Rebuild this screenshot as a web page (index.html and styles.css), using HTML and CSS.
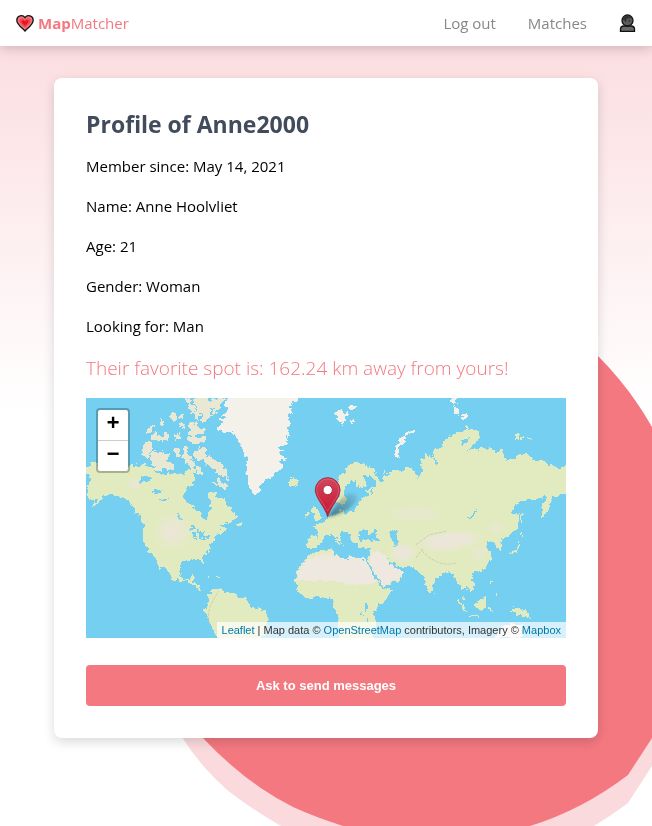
FILE: index.html
```html
<!DOCTYPE html>
<html lang="en">
<head>
<meta charset="utf-8">
<meta name="viewport" content="width=device-width, initial-scale=1">
<title>MapMatcher</title>
<link rel="stylesheet" href="styles.css">
</head>
<body>
<svg class="backdrop" viewBox="0 0 652 826" preserveAspectRatio="xMaxYMax slice" aria-hidden="true">
  <path fill="#fbdadd" d="M500 600H652V766L628 803Q612 815 594 826H281Q250 808 227 790Q200 766 182 737L160 690Z"/>
  <path fill="#f47880" d="M560 320L598 356Q630 388 652 427V738L628 775Q582 810 530 826H343Q315 817 293 807Q245 783 202 737L180 700Z"/>
</svg>
<header class="topbar">
  <a class="brand" href="#">
    <svg class="brand-icon" viewBox="0 0 18 17" aria-hidden="true">
      <path fill="#f47880" stroke="#161616" stroke-width="1.3" d="M9 16C7 13.500 .8 9.800 .8 5.200C.8 .8 6.600-.8 9 2.600C11.400-.8 17.200 .8 17.200 5.200C17.200 9.800 11 13.500 9 16Z"/>
      <path fill="#f04a56" d="M9 13C7.500 11 3.200 8.700 3.200 5.700C3.200 2.800 7.200 2.300 9 5C10.800 2.300 14.800 2.800 14.800 5.700C14.800 8.700 10.500 11 9 13Z"/>
      <path fill="#ea1522" d="M9 11C8 9.500 5.500 8.500 5.500 6.600C5.500 5 8 4.800 9 6.500C10 4.800 12.500 5 12.500 6.600C12.500 8.500 10 9.500 9 11Z"/>
    </svg>
    <span class="brand-name"><b>Map</b>Matcher</span>
  </a>
  <nav class="menu">
    <a href="#">Log out</a>
    <a href="#">Matches</a>
    <a class="account" href="#" aria-label="Account">
      <svg viewBox="0 0 17 18" aria-hidden="true">
        <path fill="#6a6a6a" stroke="#111" stroke-width="1.300" d="M1.500 17.300V15Q1.500 12.300 5 12H12Q15.500 12.300 15.500 15V17.300Z"/>
        <circle cx="8.500" cy="6.500" r="5.500" fill="#5c5c5c" stroke="#111" stroke-width="1.300"/>
        <path fill="#333" d="M3.500 6Q4 1.500 8.500 1.500T13.500 5Q10 3.500 7.500 5.500Q6 7 3.500 6Z"/>
        <path fill="#111" d="M6 6.300h1.200v1.200H6zM9.600 6.300h1.200v1.200H9.600z"/>
      </svg>
    </a>
  </nav>
</header>
<main class="card">
  <h1>Profile of Anne2000</h1>
  <p>Member since: May 14, 2021</p>
  <p>Name: Anne Hoolvliet</p>
  <p>Age: 21</p>
  <p>Gender: Woman</p>
  <p>Looking for: Man</p>
  <p class="distance">Their favorite spot is: 162.24 km away from yours!</p>
  <div class="map">
    <svg class="world" viewBox="0 0 1440 720" preserveAspectRatio="xMidYMid slice" role="img" aria-label="World map">
      <defs>
        <radialGradient id="dry"><stop offset="0" stop-color="#ede5dc"/><stop offset=".4" stop-color="#ede5dc" stop-opacity=".8"/><stop offset="1" stop-color="#ede5dc" stop-opacity="0"/></radialGradient>
        <linearGradient id="sahara" x1="0" y1="0" x2="0" y2="1"><stop offset="0" stop-color="#e6eacb"/><stop offset=".3" stop-color="#efe8e1"/><stop offset="1" stop-color="#efe8e1"/></linearGradient>
        <linearGradient id="pin" x1="0" y1="0" x2="0" y2="1"><stop offset="0" stop-color="#d0475e"/><stop offset="1" stop-color="#c8142d"/></linearGradient>
        <linearGradient id="shade" x1="0" y1="1" x2="1" y2="0"><stop offset="0" stop-color="#243c3c" stop-opacity=".6"/><stop offset="1" stop-color="#243c3c" stop-opacity=".08"/></linearGradient>
        <filter id="soft"><feGaussianBlur stdDeviation="4"/></filter>
        <filter id="coast" filterUnits="userSpaceOnUse" x="-20" y="-20" width="1480" height="760">
          <feTurbulence type="fractalNoise" baseFrequency=".07" numOctaves="2" seed="4"/>
          <feDisplacementMap in="SourceGraphic" scale="20" xChannelSelector="R" yChannelSelector="G"/>
        </filter>
      </defs>
      <rect width="1440" height="720" fill="#75cff0"/>
      <g shape-rendering="crispEdges" filter="url(#coast)">
        <g fill="#e2ebbf">
          <path d="M-20 205L12 202 20 192 30 187 36 215 130 208 133 204 150 197 160 205 172 198 182 200 185 210 205 212 210 222 238 235 245 225 258 228 280 225 297 232 295 222 312 218 318 205 330 215 318 228 322 236 330 243 318 250 325 260 312 265 300 270 293 285 295 308 318 325 340 337 347 345 350 362 362 362 362 345 372 335 372 310 365 290 372 278 388 285 388 295 400 300 408 305 412 298 418 315 430 322 438 335 445 350 458 355 440 372 415 375 400 390 420 385 420 400 405 405 390 412 385 430 370 440 372 455 362 462 350 480 355 500 347 497 345 485 320 487 300 485 283 495 280 520 292 540 302 548 310 543 318 530 327 530 320 555 340 558 340 570 348 582 330 568 310 555 285 550 255 542 248 520 235 505 225 500 230 516 218 505 212 490 200 470 188 462 185 445 172 438 172 400 178 385 165 375 160 355 150 345 145 330 130 310 115 300 105 297 80 290 60 295 50 293 48 305 40 312 35 320 15 330 35 308 15 305 0 290 10 270 0 262 15 240 10 232 -20 230Z"/>
          <path d="M372 585L385 573 403 573 410 580 440 582 455 597 480 600 492 625 530 635 548 650 540 680 525 730H400L375 680 355 640 362 625 365 600Z"/>
          <path d="M662 420L690 412 695 418 692 395 680 385 700 380 715 372 722 360 740 350 758 348 765 330 775 350 790 342 805 340 812 320 825 310 825 300 845 295 840 280 845 270 870 262 868 240 855 235 845 230 835 238 840 262 825 270 808 262 808 247 800 243 780 265 775 295 785 305 768 325 757 318 755 250 770 222 790 200 805 196 822 192 835 200 850 205 870 220 872 237 880 250 890 243 890 220 900 232 920 220 945 220 960 213 960 205 978 207 985 215 990 240 1005 235 1010 218 1002 200 1008 175 1015 185 1022 168 1035 178 1040 170 1050 200 1057 195 1045 175 1045 150 1065 150 1072 130 1080 120 1100 115 1110 108 1130 102 1140 80 1150 93 1175 98 1182 115 1175 130 1155 145 1145 160 1165 150 1175 155 1185 145 1200 152 1220 155 1230 158 1240 160 1245 150 1252 180 1265 185 1275 180 1295 183 1300 165 1310 165 1330 175 1345 190 1375 187 1385 200 1410 203 1425 210 1440 198H1460V290H1425L1410 295 1395 295 1390 330 1372 360 1365 355 1365 325 1385 300 1380 290 1372 298 1350 305 1310 305 1290 320 1275 342 1300 348 1298 375 1285 398 1270 412 1250 420 1243 435 1248 455 1240 460 1225 435 1205 430 1200 445 1215 465 1215 490 1200 508 1180 520 1160 525 1155 535 1163 555 1163 570 1150 577 1135 565 1128 575 1120 565 1110 550 1100 530 1090 520 1070 525 1045 545 1038 582 1030 585 1020 570 1012 535 1000 522 980 507 940 505 925 495 905 485 912 500 930 510 955 525 935 550 895 563 885 560 865 525 840 487 850 478 855 452 820 452 815 435 795 430 785 405 770 400 762 405 770 435 755 420 742 410 720 415 705 425 695 445 670 450 662 445Z"/>
          <path d="M670 470L700 460 740 452 745 470 785 485 790 475 840 487 865 530 885 568 915 575 905 600 865 640 870 680 860 730H760L755 650 740 625 740 600 690 598 660 600 635 580 628 550 630 525 645 500Z"/>
          <path d="M678 330l5-10 8 12 12 18 2 12-22 4 4-20-10-5zM660 345l10-5v15l-10 5zM608 245l18-4 12 5-5 15-18 4-12-10z"/>
          <path d="M740 410l18 15 15 18-20-10zM1297 430h5v20l-15 12-20 2 20-10 10-15zM1305 405l10 8-10 5zM1305 350h4v25h-4zM1168 617l15-10 17-12v35l-18 5-14-8zM1110 600l15 12 20 30-10-5zM1215 545l6 3-5 12-4-5zM1275 632l30-2 15 10 15 22-25-6-20-14-18 2zM1212 628l8 3-6 10zM1150 650l35 3v2h-35zM1130 595l9 12-5 5-8-10zM1230 585l5 2v7h-5zM1041 587h4v6h-4z"/>
          <path d="M1286 110l12-2 2 18-14-2zM1302 113h15v9h-15zM1325 120l15 3v3h-15zM450 378h17v7h-13zM370 530l4 7h-4zM390 538h12v3h-12z"/>
        </g>
        <g fill="#e9e8d3">
          <path d="M165 165l10-28 15-2 12 10-7 20-10 14-18-8zM192 172l16-16 5 10 15-12 4 12 15 4-3 20 22 10-4 18-32-6-22 8 5-12-18-8zM268 155l14-7-2 20 4 12-14-4zM290 143l16 2-1 25 10 10-17 18-9-20 5-12zM305 190l15-7 10 20-10 12-19-14zM322 165l16-9 5-12 17 10 0 16 14 2 4 12 12 2 6 10 12 2 8 15 9 8-4 15 14 14-14-4-14-15-18-4 4-8-14-12-18-6-14-14-15-3zM380 250l14 5 4-20 12 20 9 5 2 14-18-4-6-10-12 4z"/>
          <path d="M178 103l14-16 12-8-6 19-14 10zM198 112l16-9v10l18 3 4-14 11 8v15l-33 5-14-5zM212 78l16-12 7 6-12 15zM250 50l20-9 4 24-16 8zM262 110l22-6-3 19-14 2zM276 56l18-7-4 17zM283 74l9-4 1 20-9-6zM305 77l22-5 5 14 24 6-4 14-22 2-7 12-15-12 6-10zM304 122l18-10 10 10 24-7 2 16-20 4-30-2zM331 200l14 5 2 25-15-5zM343 60l10 2-2 16z"/>
          <path d="M293 0h16l5 18 17 6-5 24-22-14 8-16zM318 0h44l4 12 20-10 14 12-14 16-16 6 6 22-22 16-10-22-13-10 6-18-14-8zM328 38l14 14-4 16-10-8zM430 0l-18 2-12 32-28 24 12-28-10-8 18-22z"/>
        </g>
        <g fill="#f4f0ea">
          <path d="M428-15L420 20 425 38 412 50 417 62 395 62 408 72 395 92 403 103 440 100 455 125 460 145 470 155 475 175 485 183 482 230 492 270 503 290 515 290 523 265 530 255 545 238 555 240 570 220 590 212 595 200 578 195 583 185 600 190 595 175 580 170 590 160 580 145 597 145 605 125 600 115 613 118 605 90 612 70 605 50 620 40 612 28 620 10 635 12 635-15Z"/>
          <path d="M750 40l15-5 10 12 10-8 5 10-12 6-5 30-7-15-12-5zM785 28l20-8 7 10-20 9zM792 68l10-3v12h-7zM925 170l8-30 15-27 12-7v17l-15 15-10 30 5 15zM960 105l20-8 10-7-5 14-25 12zM1096-15h18v35h-16zM1102 28l18 5v15h-14zM1127 50l16-4 3 14-18 7z"/>
          <path d="M1240 690l20-12h50v42h-80z"/>
        </g>
        <path fill="url(#sahara)" d="M652 500L670 480 740 458 745 470 785 485 790 475 840 487 865 530 868 555 790 560 730 548 630 550 634 520Z"/>
        <path fill="#efe8e1" d="M860 458L885 462 915 500 930 510 955 525 935 545 895 560 885 558 850 490Z"/>
        <g fill="#75cff0">
          <path d="M165 238l12-6 20 8-7 12-24 4zM200 278l35-7-20 17-15 3zM223 306l22-5v6l-22 4zM273 345l8 4 6 20-10-3zM305 393l17-14 12 14-14-2-10 5zM318 402h10l5 22h-10zM335 395l12 12 12-6-8 16-12 2zM348 417l27-7-7 10-22 7z"/>
          <path d="M815 412l15-18 15 2v10l10 2 5-17 15 8-8 8 14 18-16 5-28-5-14 5zM905 405l18-14 12 7-5 10 8 18v22l-16 2 3-18zM822 290l22-8 2 12-20 6zM852 282l8-8v14zM1145 360l15-8 12-22-1 20-17 16zM1125 125l10 3 15-5v7l-15 6-8 10zM835 618l12 2v12l-12 5zM823 632l8 20v8zM842 655l7 20h-4zM836 482l10 6 24 42 18 32-8-2-16-28z"/>
        </g>
      </g>
      <g fill="url(#dry)">
        <ellipse cx="1070" cy="432" rx="85" ry="34"/><ellipse cx="1125" cy="422" rx="65" ry="28"/>
        <ellipse cx="950" cy="465" rx="45" ry="35"/><ellipse cx="990" cy="345" rx="90" ry="30" opacity=".5"/>
        <ellipse cx="260" cy="400" rx="60" ry="60" opacity=".8"/><ellipse cx="145" cy="260" rx="26" ry="18" opacity=".7"/>
        <ellipse cx="1230" cy="390" rx="30" ry="24" opacity=".5"/>
        <ellipse cx="1180" cy="465" rx="30" ry="30" opacity=".5"/>
      </g>
      <g fill="none" stroke="#c5c8ac" stroke-width="3" stroke-dasharray="10 3" opacity=".8">
        <path d="M1008 458Q1025 480 1055 492T1112 494M990 440L1030 410 1080 400M372 680Q355 640 398 580M990 480l20-28"/>
      </g>
      <path fill="url(#shade)" filter="url(#soft)" d="M725 357L760 308Q790 278 808 290T788 332Q765 350 725 357Z"/>
      <path fill="url(#pin)" stroke="#a52b41" stroke-width="3" d="M725 356C719 330 688 300 688 276A37 37 0 0 1 762 276C762 300 731 330 725 356Z"/>
      <path fill="none" stroke="#e17b8a" stroke-width="2" opacity=".7" d="M725 340C716 320 692 297 692 276A33 33 0 0 1 758 276C758 297 734 320 725 340"/>
      <circle cx="725" cy="276" r="14" fill="#fff" stroke="#ae2b41" stroke-width="3"/>
    </svg>
    <div class="zoom">
      <button type="button" aria-label="Zoom in">+</button>
      <button type="button" aria-label="Zoom out">−</button>
    </div>
    <div class="credits"><a href="#">Leaflet</a> | Map data © <a href="#">OpenStreetMap</a> contributors, Imagery © <a href="#">Mapbox</a></div>
  </div>
  <button class="ask" type="button">Ask to send messages</button>
</main>
</body>
</html>
```
FILE: styles.css
```css
* { box-sizing: border-box; }

body {
  margin: 0;
  min-height: 100vh;
  background: linear-gradient(#fbdadd, #fff 50%) no-repeat fixed;
  color: #000;
  font: 15px/24px "Segoe UI", "Open Sans", "Noto Sans", sans-serif;
}

a { color: inherit; text-decoration: none; }

.backdrop {
  position: fixed;
  inset: 0;
  z-index: -1;
  width: 100%;
  height: 100%;
}

.topbar {
  display: flex;
  align-items: center;
  justify-content: space-between;
  height: 46px;
  padding: 0 16px;
  background: #fff;
  box-shadow: 0 2px 12px rgba(0, 0, 0, .2);
}

.brand {
  display: flex;
  align-items: center;
  gap: 4px;
  color: #f47880;
}

.brand-icon { width: 18px; height: 17px; }
.brand-name { font-weight: 400; }
.brand-name b { font-weight: 700; }

.menu {
  display: flex;
  align-items: center;
  gap: 32px;
  color: #888;
}

.account { display: flex; }
.account svg { width: 17px; height: 18px; }

.card {
  max-width: 544px;
  margin: 32px auto;
  padding: 32px;
  border-radius: 8px;
  background: #fff;
  box-shadow: 0 4px 12px rgba(0, 0, 0, .15);
}

h1 {
  margin: 0 0 16px;
  color: #414b5c;
  font-size: 23px;
  line-height: 28px;
}

p { margin: 0 0 16px; }

.distance {
  color: #f47880;
  font-size: 19px;
  line-height: 28px;
  font-weight: 300;
}

.map {
  position: relative;
  height: 240px;
  overflow: hidden;
}

.world { display: block; width: 100%; height: 100%; }

.zoom {
  position: absolute;
  top: 10px;
  left: 10px;
  border: 2px solid rgba(0, 0, 0, .25);
  border-radius: 4px;
  background: #fff;
  background-clip: padding-box;
}

.zoom button {
  display: block;
  width: 30px;
  height: 30px;
  padding: 0;
  border: 0;
  background: none;
  color: #000;
  font: bold 22px/30px "Liberation Mono", monospace;
}

.zoom button + button {
  height: 31px;
  border-top: 1px solid #ccc;
}

.credits {
  position: absolute;
  right: 0;
  bottom: 0;
  padding: 0 5px;
  background: rgba(255, 255, 255, .7);
  color: #333;
  font: 11px/16px "Liberation Sans", sans-serif;
}

.credits a { color: #0078a8; }

.ask {
  display: block;
  width: 100%;
  margin-top: 27px;
  padding: 13px;
  border: 0;
  border-radius: 4px;
  background: #f47880;
  color: #fff;
  font: bold 13px/15px "Liberation Sans", sans-serif;
}
```
